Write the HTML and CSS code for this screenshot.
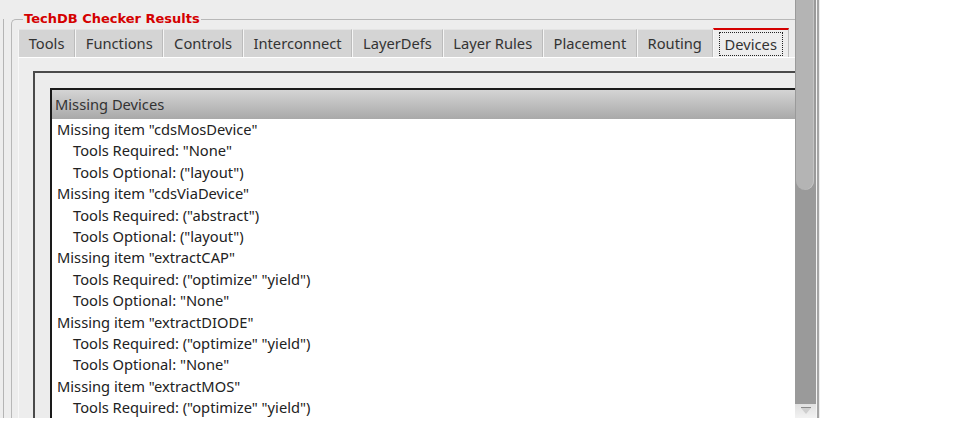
FILE: index.html
```html
<!DOCTYPE html>
<html>
<head>
<meta charset="utf-8">
<link rel="stylesheet" href="styles.css">
</head>
<body>
<div class="window">
  <div class="content">
    <div class="frame">
      <div class="group">
        <div class="group-title">TechDB Checker Results</div>
        <div class="tabs">
          <div class="tab">Tools</div>
          <div class="tab">Functions</div>
          <div class="tab">Controls</div>
          <div class="tab">Interconnect</div>
          <div class="tab">LayerDefs</div>
          <div class="tab">Layer Rules</div>
          <div class="tab">Placement</div>
          <div class="tab">Routing</div>
          <div class="tab tab-active"><span class="focus">Devices</span></div>
        </div>
        <div class="pane">
          <div class="pane-inner">
            <div class="list">
              <div class="list-header">Missing Devices</div>
              <div class="list-body">
                <div class="row">Missing item "cdsMosDevice"</div>
                <div class="row sub">Tools Required: "None"</div>
                <div class="row sub">Tools Optional: ("layout")</div>
                <div class="row">Missing item "cdsViaDevice"</div>
                <div class="row sub">Tools Required: ("abstract")</div>
                <div class="row sub">Tools Optional: ("layout")</div>
                <div class="row">Missing item "extractCAP"</div>
                <div class="row sub">Tools Required: ("optimize" "yield")</div>
                <div class="row sub">Tools Optional: "None"</div>
                <div class="row">Missing item "extractDIODE"</div>
                <div class="row sub">Tools Required: ("optimize" "yield")</div>
                <div class="row sub">Tools Optional: "None"</div>
                <div class="row">Missing item "extractMOS"</div>
                <div class="row sub">Tools Required: ("optimize" "yield")</div>
              </div>
            </div>
          </div>
        </div>
      </div>
    </div>
  </div>
  <div class="scrollbar">
    <div class="thumb"></div>
    <div class="track"></div>
    <div class="sb-btn"><span class="arrow"></span></div>
  </div>
  <div class="sb-gap"></div>
  <div class="sb-edge"></div>
</div>
</body>
</html>
```
FILE: styles.css
```css
html, body {
  margin: 0;
  padding: 0;
  background: #ffffff;
}
body {
  font-family: "Noto Sans", "DejaVu Sans", sans-serif;
  font-size: 14.7px;
  color: #222;
}
.window {
  display: flex;
  width: 820px;
  height: 418px;
  background: #ededed;
}
.content {
  width: 795px;
  height: 418px;
  overflow: hidden;
  padding-left: 3px;
  box-sizing: border-box;
}
.frame {
  height: 100%;
  border-left: 1px solid #b4b4b4;
  padding-left: 7px;
}
.group {
  margin-top: 19px;
  height: 400px;
  border-top: 1px solid #b8b8b8;
  border-left: 1px solid #b8b8b8;
  border-top-left-radius: 5px;
  padding-left: 6px;
  width: 900px;
}
.group-title {
  display: table;
  margin: -10px 0 1px 5px;
  padding: 0 1px;
  height: 18px;
  line-height: 18px;
  background: #ededed;
  color: #d40000;
  font-family: "DejaVu Sans", sans-serif;
  font-weight: bold;
  font-size: 13px;
}
.tabs {
  display: flex;
  height: 28px;
  align-items: stretch;
}
.tab {
  box-sizing: border-box;
  padding: 0 9.7px;
  background: #d4d4d4;
  border-top: 1px solid #e4e4e4;
  border-left: 1px solid #f6f6f6;
  border-right: 1px solid #bcbcbc;
  line-height: 27px;
  color: #333;
}
.tab-active {
  background: #ededed;
  border-top: 2px solid #d40000;
  margin-top: -1px;
  height: 29px;
  padding: 2px 5px 0 5px;
  line-height: 22px;
}
.focus {
  display: block;
  border: 1px dotted #222;
  padding: 0 5px;
}
.pane {
  border-top: 1px solid #ffffff;
  border-left: 1px solid #f8f8f8;
  padding: 13px 0 0 14px;
  height: 400px;
}
.pane-inner {
  border-top: 2px solid #4a4a4a;
  border-left: 2px solid #4a4a4a;
  padding: 15px 0 0 15px;
  height: 400px;
  background: #ececec;
}
.list {
  border-top: 2px solid #1a1a1a;
  border-left: 2px solid #1a1a1a;
  background: #ffffff;
  height: 400px;
}
.list-header {
  height: 29px;
  line-height: 29px;
  padding-left: 3px;
  color: #333;
  background: linear-gradient(#d4d4d4, #a9a9a9);
}
.list-body {
  padding: 0 0 0 5px;
}
.row {
  height: 21.4px;
  line-height: 21.4px;
  white-space: nowrap;
}
.row.sub {
  padding-left: 16px;
}
.scrollbar {
  width: 21px;
  height: 418px;
  display: flex;
  flex-direction: column;
  background: #9a9a9a;
}
.thumb {
  height: 190px;
  margin: 0 2px 0 1px;
  background: #b4b4b4;
  border-bottom-left-radius: 9px;
  border-bottom-right-radius: 9px;
  box-shadow: inset -1px 0 0 #c4c4c4;
}
.track {
  flex: 1;
}
.sb-btn {
  height: 14px;
  background: linear-gradient(#e0e0e0, #f2f2f2);
  display: flex;
  justify-content: center;
  align-items: flex-start;
}
.arrow {
  margin-top: 4px;
  width: 0;
  height: 0;
  border-left: 5px solid transparent;
  border-right: 5px solid transparent;
  border-top: 6px solid #cfcfcf;
  box-shadow: 0 -1px 0 #8a8a8a;
}
.sb-gap {
  width: 1px;
  height: 418px;
  background: #f4f4f4;
}
.sb-edge {
  width: 2px;
  height: 418px;
  background: #a5a5a5;
}
```
